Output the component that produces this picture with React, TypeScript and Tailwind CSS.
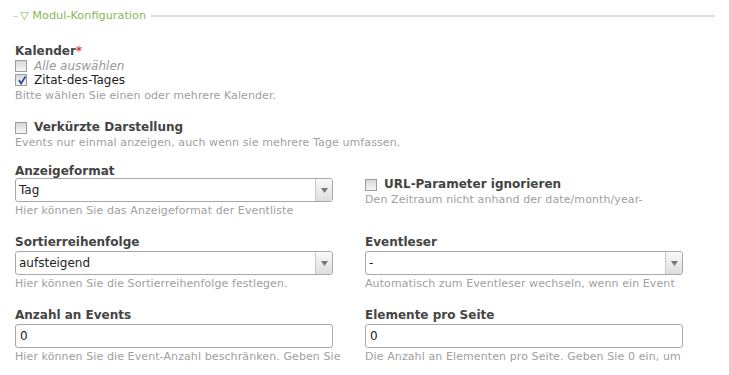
import React from "react";

const font = { fontFamily: '"DejaVu Sans", Verdana, sans-serif' };

function Checkbox({ checked = false }: { checked?: boolean }) {
  return (
    <span className="relative inline-block w-[12px] h-[12px] border border-[#9c9c9c] bg-gradient-to-b from-[#d8d8d8] to-[#f6f6f6] shrink-0">
      {checked && (
        <svg className="absolute left-[1px] top-[0px]" width="10" height="10" viewBox="0 0 10 10">
          <path d="M2 5 L4 8.5 L8.5 1.5" stroke="#2c4a9a" strokeWidth="1.7" fill="none" />
        </svg>
      )}
    </span>
  );
}

function Select({ value }: { value: string }) {
  return (
    <div className="flex w-[318px] h-[24px] border border-[#a8a8a8] rounded-[3px] bg-white overflow-hidden">
      <div className="flex-1 flex items-center pl-[3px] text-[12px] text-[#222]">{value}</div>
      <div className="w-[17px] border-l border-[#c8c8c8] bg-gradient-to-b from-[#fafafa] to-[#dedede] flex items-center justify-center">
        <svg width="7" height="5" viewBox="0 0 7 5">
          <path d="M0 0 L7 0 L3.5 5 Z" fill="#777" />
        </svg>
      </div>
    </div>
  );
}

function Input({ value }: { value: string }) {
  return (
    <div className="flex w-[318px] h-[24px] border border-[#a8a8a8] rounded-[3px] bg-white items-center pl-[4px] text-[12px] text-[#222]">
      {value}
    </div>
  );
}

function Label({ children }: { children: React.ReactNode }) {
  return <div className="text-[12px] font-bold text-[#444] leading-[15px]">{children}</div>;
}

function Help({ children }: { children: React.ReactNode }) {
  return (
    <div className="text-[11px] tracking-[0.1px] text-[#a0a0a0] leading-[14px] whitespace-nowrap overflow-hidden">
      {children}
    </div>
  );
}

export default function App() {
  return (
    <div className="w-[729px] h-[375px] bg-white overflow-hidden" style={font}>
      <div className="flex items-center pt-[9px] pl-[13px] pr-[14px] h-[23px]">
        <div className="w-[5px] h-[1px] bg-[#d4d4d4]" />
        <span className="ml-[2px] text-[11.3px] text-[#8ab858] leading-[14px] whitespace-nowrap">▽ Modul-Konfiguration</span>
        <div className="flex-1 ml-[5px] h-[2px] bg-[#e0e0e0]" />
      </div>

      <div className="px-[15px]">
        <div className="mt-[21px]">
          <Label>
            Kalender<span className="text-[#e03a3a]">*</span>
          </Label>
          <div className="flex items-center gap-[7px] h-[14px]">
            <Checkbox />
            <span className="text-[12px] italic text-[#999]">Alle auswählen</span>
          </div>
          <div className="flex items-center gap-[7px] h-[14px]">
            <Checkbox checked />
            <span className="text-[12px] text-[#222]">Zitat-des-Tages</span>
          </div>
          <div className="mt-[2px]">
            <Help>Bitte wählen Sie einen oder mehrere Kalender.</Help>
          </div>
        </div>

        <div className="mt-[17px]">
          <div className="flex items-center gap-[7px] h-[15px]">
            <Checkbox />
            <Label>Verkürzte Darstellung</Label>
          </div>
          <div className="mt-[1px]">
            <Help>Events nur einmal anzeigen, auch wenn sie mehrere Tage umfassen.</Help>
          </div>
        </div>

        <div className="grid grid-cols-[350px_350px] mt-[14px]">
          <div>
            <Label>Anzeigeformat</Label>
            <div className="-mt-[1px]">
              <Select value="Tag" />
            </div>
            <div className="mt-[2px]">
              <Help>Hier können Sie das Anzeigeformat der Eventliste</Help>
            </div>
          </div>
          <div className="pt-[13px]">
            <div className="flex items-center gap-[7px] h-[15px]">
              <Checkbox />
              <Label>URL-Parameter ignorieren</Label>
            </div>
            <div className="mt-[1px]">
              <Help>Den Zeitraum nicht anhand der date/month/year-</Help>
            </div>
          </div>
        </div>

        <div className="grid grid-cols-[350px_350px] mt-[17px]">
          <div>
            <Label>Sortierreihenfolge</Label>
            <div className="mt-[1px]">
              <Select value="aufsteigend" />
            </div>
            <div className="mt-[2px]">
              <Help>Hier können Sie die Sortierreihenfolge festlegen.</Help>
            </div>
          </div>
          <div>
            <Label>Eventleser</Label>
            <div className="mt-[1px]">
              <Select value="-" />
            </div>
            <div className="mt-[2px]">
              <Help>Automatisch zum Eventleser wechseln, wenn ein Event</Help>
            </div>
          </div>
        </div>

        <div className="grid grid-cols-[350px_350px] mt-[17px]">
          <div>
            <Label>Anzahl an Events</Label>
            <div className="mt-[1px]">
              <Input value="0" />
            </div>
            <div className="mt-[2px]">
              <Help>Hier können Sie die Event-Anzahl beschränken. Geben Sie</Help>
            </div>
          </div>
          <div>
            <Label>Elemente pro Seite</Label>
            <div className="mt-[1px]">
              <Input value="0" />
            </div>
            <div className="mt-[2px]">
              <Help>Die Anzahl an Elementen pro Seite. Geben Sie 0 ein, um</Help>
            </div>
          </div>
        </div>
      </div>
    </div>
  );
}
